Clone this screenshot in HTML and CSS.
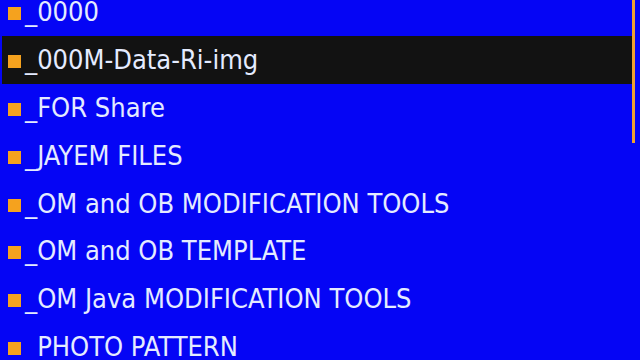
FILE: index.html
```html
<!DOCTYPE html>
<html>
<head>
<meta charset="utf-8">
<link rel="stylesheet" href="styles.css">
</head>
<body>
<div class="screen">
  <ul class="list">
    <li class="row"><span class="icon"></span><span class="name">_0000</span></li>
    <li class="row selected"><span class="icon"></span><span class="name">_000M-Data-Ri-img</span></li>
    <li class="row"><span class="icon"></span><span class="name">_FOR Share</span></li>
    <li class="row"><span class="icon"></span><span class="name">_JAYEM FILES</span></li>
    <li class="row"><span class="icon"></span><span class="name">_OM and OB MODIFICATION TOOLS</span></li>
    <li class="row"><span class="icon"></span><span class="name">_OM and OB TEMPLATE</span></li>
    <li class="row"><span class="icon"></span><span class="name">_OM Java MODIFICATION TOOLS</span></li>
    <li class="row"><span class="icon"></span><span class="name">_PHOTO PATTERN</span></li>
  </ul>
  <div class="scrollbar"></div>
</div>
</body>
</html>
```
FILE: styles.css
```css
html, body {
  margin: 0;
  padding: 0;
  width: 640px;
  height: 360px;
  overflow: hidden;
  background: #0505f5;
}
.screen {
  position: relative;
  width: 640px;
  height: 360px;
  overflow: hidden;
  background: #0505f5;
}
.list {
  list-style: none;
  margin: -12px 0 0 0;
  padding: 0 8px 0 2px;
}
.row {
  height: 47.8px;
  display: flex;
  align-items: center;
  padding-left: 6px;
  font-family: "DejaVu Sans Condensed", "DejaVu Sans", sans-serif;
  font-size: 27px;
  color: #e4ebff;
  white-space: nowrap;
}
.row.selected {
  background: #121212;
}
.icon {
  width: 13px;
  height: 13px;
  background: #f5a21e;
  margin-right: 4px;
  flex: none;
  position: relative;
  top: 2px;
}
.name {
  line-height: 1;
}
.scrollbar {
  position: absolute;
  left: 632px;
  top: 0;
  width: 3px;
  height: 143px;
  background: #f0a030;
}
```
